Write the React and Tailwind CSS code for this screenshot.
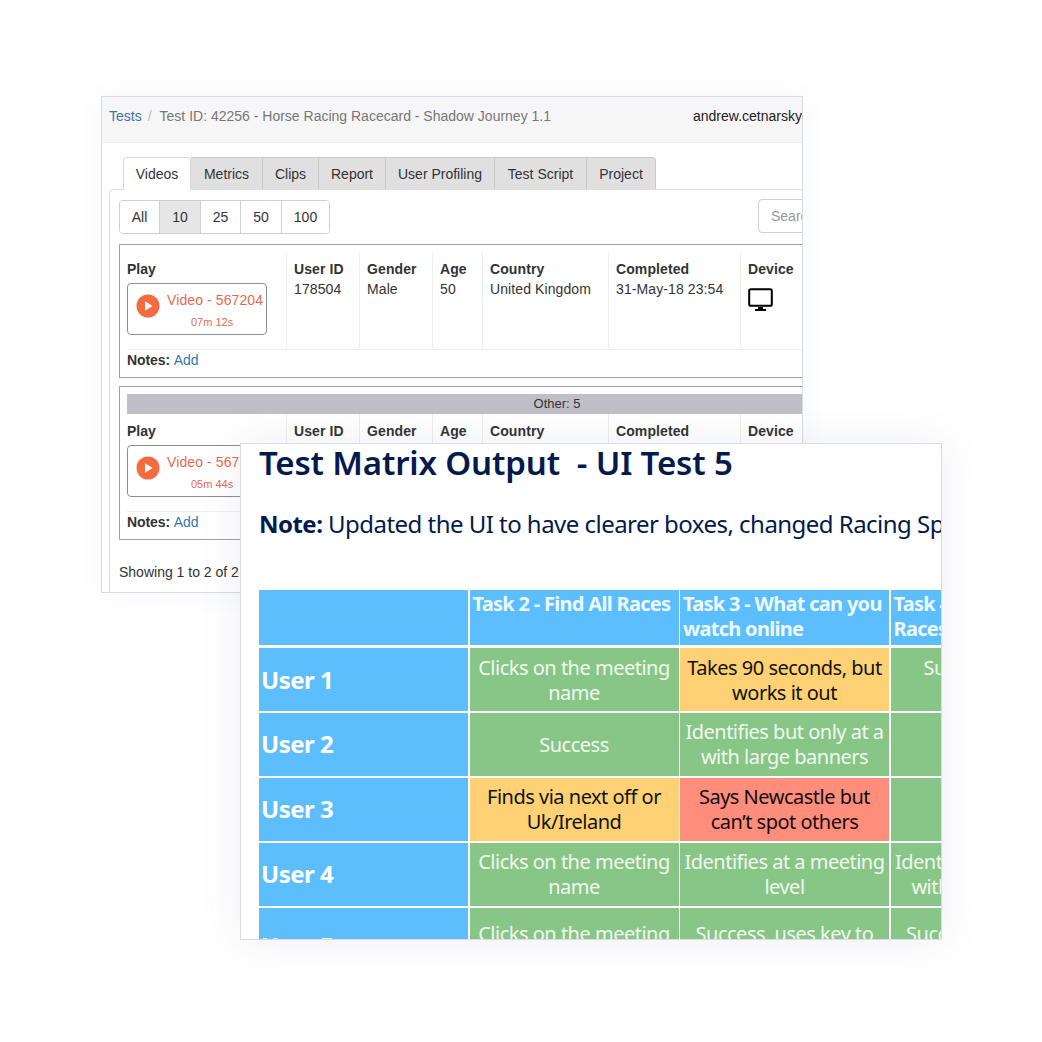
const TABS = [
  { label: 'Metrics', width: 'w-[72px]' },
  { label: 'Clips', width: 'w-[56px]' },
  { label: 'Report', width: 'w-[67px]' },
  { label: 'User Profiling', width: 'w-[109px]' },
  { label: 'Test Script', width: 'w-[92px]' },
]

const PAGE_SIZES = [
  { label: 'All', width: 'w-[39px]' },
  { label: '10', width: 'w-[41px]', active: true },
  { label: '25', width: 'w-[40px]' },
  { label: '50', width: 'w-[41px]' },
  { label: '100', width: 'w-[48px]' },
]

const COLUMNS = [
  { title: 'User ID', width: 'w-[73px]' },
  { title: 'Gender', width: 'w-[73px]' },
  { title: 'Age', width: 'w-[50px]' },
  { title: 'Country', width: 'w-[126px]' },
  { title: 'Completed', width: 'w-[132px]' },
  { title: 'Device', width: 'w-[100px]' },
]

const GREEN = 'bg-[#87c687] text-[#f2f8ee]'
const AMBER = 'bg-[#fed274] text-[#10120c]'
const RED = 'bg-[#fe8d7c] text-[#160c0c]'

const MATRIX = [
  {
    user: 'User 1',
    cells: [
      { text: ['Clicks on the meeting', 'name'], tone: GREEN },
      { text: ['Takes 90 seconds, but', 'works it out'], tone: AMBER },
      { text: ['Success via next', 'race menu'], tone: GREEN },
    ],
  },
  {
    user: 'User 2',
    cells: [
      { text: ['Success'], tone: GREEN },
      { text: ['Identifies but only at a', 'with large banners'], tone: GREEN },
      { text: ['Success'], tone: GREEN },
    ],
  },
  {
    user: 'User 3',
    cells: [
      { text: ['Finds via next off or', 'Uk/Ireland'], tone: AMBER },
      { text: ['Says Newcastle but', 'can’t spot others'], tone: RED },
      { text: ['Success'], tone: GREEN },
    ],
  },
  {
    user: 'User 4',
    cells: [
      { text: ['Clicks on the meeting', 'name'], tone: GREEN },
      { text: ['Identifies at a meeting', 'level'], tone: GREEN },
      { text: ['Identifies at a meeting', 'with large banners'], tone: GREEN },
    ],
  },
  {
    user: 'User 5',
    cells: [
      { text: ['Clicks on the meeting', 'name'], tone: GREEN },
      { text: ['Success, uses key to', 'spot them'], tone: GREEN },
      { text: ['Success, uses key to', 'spot them'], tone: GREEN },
    ],
  },
]

function PlayIcon() {
  return (
    <svg width="24" height="24" viewBox="0 0 24 24" className="mb-[6px] shrink-0">
      <circle cx="12" cy="12" r="11.5" fill="#f26b41" />
      <path d="M9 7.2 L16.6 12 L9 16.8 Z" fill="#fff" />
    </svg>
  )
}

function MonitorIcon() {
  return (
    <svg width="26" height="24" viewBox="0 0 26 24" fill="none">
      <rect x="1.2" y="1.2" width="22.6" height="16.6" rx="1.6" stroke="#000" strokeWidth="2" />
      <path d="M10 19 H15 V21 H18 V23 H7 V21 H10 Z" fill="#000" />
    </svg>
  )
}

function ResultCard({ time, device, banner }) {
  return (
    <div className="w-[900px] border border-[#a0a0a0] px-[7px] pt-[7px]">
      {banner && (
        <div className="h-[20px] w-[860px] bg-[#c0bfc8] text-center text-[13px] leading-[20px] text-[#333]">
          {banner}
        </div>
      )}
      <div className="flex h-[98px] border-b border-[#eeeeee]">
        <div className="w-[159px] shrink-0 pt-[7px]">
          <div className="text-[14px] font-bold leading-[20px] text-[#333]">Play</div>
          <div className="mt-[4px] flex h-[52px] w-[140px] items-center gap-[7px] overflow-hidden whitespace-nowrap rounded-[4px] border border-[#8d8d8d] pl-[8px]">
            <PlayIcon />
            <div className="text-[#e8694a]">
              <div className="text-[14px] leading-[20px] tracking-[0.1px]">Video - 567204</div>
              <div className="mt-[5px] pr-[6px] text-center text-[11px] leading-[14px]">{time}</div>
            </div>
          </div>
        </div>
        {COLUMNS.map((col, i) => (
          <div key={col.title} className={`${col.width} shrink-0 border-l border-[#eeeeee] pl-[7px] pt-[7px] text-[14px] leading-[20px] tracking-[0.1px] text-[#333]`}>
            <div className="font-bold">{col.title}</div>
            {i === 0 && <div>178504</div>}
            {i === 1 && <div>Male</div>}
            {i === 2 && <div>50</div>}
            {i === 3 && <div>United Kingdom</div>}
            {i === 4 && <div>31-May-18 23:54</div>}
            {i === 5 && device && <div className="pt-[9px]"><MonitorIcon /></div>}
          </div>
        ))}
      </div>
      <div className="h-[27px] text-[14px] leading-[20px] tracking-[-0.1px] text-[#333]">
        <span className="font-bold">Notes: </span>
        <span className="text-[#3a74ac]">Add</span>
      </div>
    </div>
  )
}

function TestWindow() {
  return (
    <div className="absolute left-[101px] top-[96px] h-[497px] w-[702px] overflow-hidden border border-[#d9dbe6] bg-white font-['Liberation_Sans',sans-serif] shadow-[0_0_24px_rgba(90,100,140,0.06)]">
      <div className="flex h-[46px] items-center whitespace-nowrap border-b border-[#eeeeee] bg-[#f6f6f6] pb-[6px] text-[14px]">
        <div className="w-[591px] shrink-0 pl-[7px]">
          <span className="text-[#3f72a8]">Tests</span>
          <span className="pl-[6px] pr-[8px] text-[#bbbbbb]">/</span>
          <span className="text-[#777777]">Test ID: 42256 - Horse Racing Racecard - Shadow Journey 1.1</span>
        </div>
        <span className="text-[#222]">andrew.cetnarsky</span>
      </div>

      <div className="relative z-10 ml-[21px] mt-[14px] flex h-[33px] whitespace-nowrap text-[14px] text-[#333]">
        <div className="flex h-[33px] w-[68px] items-center justify-center rounded-t-[4px] border border-b-0 border-[#d8d8d8] bg-white">Videos</div>
        {TABS.map(tab => (
          <div key={tab.label} className={`${tab.width} flex h-[32px] items-center justify-center border-r border-t border-[#c9c9c9] bg-[#e0e0e0] pt-[1px]`}>
            {tab.label}
          </div>
        ))}
        <div className="flex h-[32px] w-[69px] items-center justify-center rounded-tr-[4px] border-r border-t border-[#c9c9c9] bg-[#e0e0e0] pt-[1px]">Project</div>
      </div>

      <div className="-mt-[1px] ml-[7px] h-[420px] w-[720px] rounded-tl-[4px] border border-[#dddddd] pl-[9px] pt-[10px]">
        <div className="flex h-[34px] items-start">
          <div className="flex h-[34px] shrink-0 overflow-hidden rounded-[4px] border border-[#cfcfcf] text-[14px] text-[#333]">
            {PAGE_SIZES.map((size, i) => (
              <div
                key={size.label}
                className={`${size.width} ${i > 0 ? 'border-l border-[#cfcfcf]' : ''} ${size.active ? 'bg-[#e6e6e6]' : 'bg-white'} flex shrink-0 items-center justify-center`}
              >
                {size.label}
              </div>
            ))}
          </div>
          <div className="-mt-[1px] ml-[428px] flex h-[34px] w-[120px] shrink-0 items-center rounded-[4px] border border-[#cfcfcf] pl-[12px] text-[14px] text-[#999]">
            Search
          </div>
        </div>

        <div className="mt-[10px] flex flex-col gap-[8px]">
          <ResultCard time="07m 12s" device />
          <ResultCard time="05m 44s" banner="Other: 5" />
        </div>

        <div className="mt-[22px] text-[14px] leading-[20px] text-[#333]">Showing 1 to 2 of 2 entries</div>
      </div>
    </div>
  )
}

function MatrixCell({ lines, tone }) {
  return (
    <div className={`${tone} flex flex-col items-center justify-center overflow-hidden whitespace-nowrap text-center text-[20px] leading-[25px] tracking-[-0.5px]`}>
      {lines.map(line => <div key={line}>{line}</div>)}
    </div>
  )
}

function MatrixWindow() {
  const headCell = 'overflow-hidden whitespace-nowrap bg-[#5dbefe] px-[3px] pt-[1px] text-[20px] font-bold leading-[25px] tracking-[-0.7px] text-[#eef8ff]'

  return (
    <div className="absolute left-[240px] top-[443px] h-[497px] w-[702px] overflow-hidden border border-[#d9dbe6] bg-white font-['Noto_Sans',sans-serif] text-[#031a4d] shadow-[0_0_40px_rgba(90,100,140,0.1)]">
      <div className="ml-[18px] whitespace-nowrap">
        <h1 className="text-[33px] font-semibold leading-[38px] tracking-[-0.15px]">Test Matrix Output&nbsp; - UI Test 5</h1>
        <p className="mt-[23px] text-[24px] leading-[38px] tracking-[-0.53px]">
          <span className="font-bold">Note:</span> Updated the UI to have clearer boxes, changed Racing Specials
        </p>
      </div>

      <div className="ml-[18px] mt-[47px] w-[840px]">
        <div className="mb-[3px] grid h-[55px] grid-cols-[209px_209px_209px_209px] gap-x-[1.5px]">
          <div className="bg-[#5dbefe]" />
          <div className={headCell}>Task 2 - Find All Races</div>
          <div className={headCell}>Task 3 - What can you<br />watch online</div>
          <div className={headCell}>Task 4 - Find Live<br />Races</div>
        </div>

        <div className="grid grid-cols-[209px_209px_209px_209px] grid-rows-[63px_63.5px_63.5px_63.5px_76px] gap-x-[1.5px] gap-y-[1.5px]">
          {MATRIX.map(row => (
            <div key={row.user} className="contents">
              <div className="flex items-center bg-[#5dbefe] pl-[2px] text-[24px] font-bold tracking-[-0.5px] text-white">{row.user}</div>
              {row.cells.map((cell, c) => (
                <MatrixCell key={c} lines={cell.text} tone={cell.tone} />
              ))}
            </div>
          ))}
        </div>
      </div>
    </div>
  )
}

export default function App() {
  return (
    <div className="relative h-[1042px] w-[1042px] overflow-hidden bg-white">
      <TestWindow />
      <MatrixWindow />
    </div>
  )
}
